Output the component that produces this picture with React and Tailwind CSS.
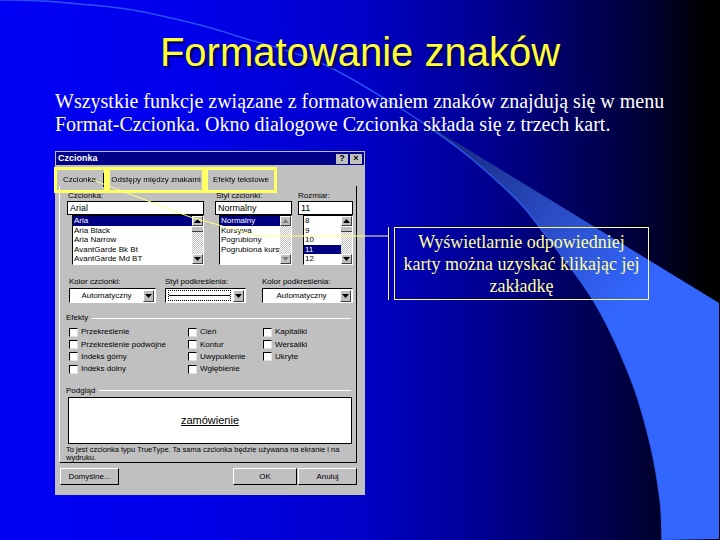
const pts = [[0,0],[43,1],[80,4],[133,10],[200,25],[240,37],[321,63],[400,108],[443,137],[473,160],[517,200],[540,228],[593,300],[630,377],[650,443],[660,500],[662,540]];
function smooth(p) {
  let d = `M${p[0][0]} ${p[0][1]}`;
  for (let i = 0; i < p.length - 1; i++) {
    const a = p[Math.max(i - 1, 0)], b = p[i], c = p[i + 1], e = p[Math.min(i + 2, p.length - 1)];
    d += ` C${(b[0] + (c[0] - a[0]) / 6).toFixed(1)} ${(b[1] + (c[1] - a[1]) / 6).toFixed(1)} ${(c[0] - (e[0] - b[0]) / 6).toFixed(1)} ${(c[1] - (e[1] - b[1]) / 6).toFixed(1)} ${c[0]} ${c[1]}`;
  }
  return d;
}
const full = smooth(pts);
const lower = smooth(pts.slice(7));

function Background() {
  return (
    <svg className="absolute inset-0" width="720" height="540" viewBox="0 0 720 540">
      <defs>
        <linearGradient id="band" gradientUnits="userSpaceOnUse" x1="440" y1="130" x2="630" y2="300">
          <stop offset="0" stopColor="#14267a" />
          <stop offset="0.55" stopColor="#2a4cc4" />
          <stop offset="1" stopColor="#3366ff" />
        </linearGradient>
      </defs>
      <path d={`${lower} L719 539 L719 303 Z`} fill="url(#band)" />
      <path d={full} fill="none" stroke="#3366ff" strokeWidth="1.4" opacity="0.8" />
    </svg>
  );
}

function Tri({ up, muted }) {
  return (
    <svg width="7" height="4" viewBox="0 0 7 4">
      <path d={up ? "M3.5 0L7 4H0Z" : "M0 0H7L3.5 4Z"} fill={muted ? "#808080" : "#000"} />
    </svg>
  );
}

function ScrollBtn({ up, muted }) {
  return (
    <div className="h-[10px] w-[11px] shrink-0 bg-[#c0c0c0] border border-t-white border-l-white border-b-[#404040] border-r-[#404040] flex items-center justify-center">
      <Tri up={up} muted={muted} />
    </div>
  );
}

function ListBox({ items, selected, className, muted, thumb = true }) {
  return (
    <div className={`h-[50px] flex bg-white border border-t-black border-l-black border-b-white border-r-white overflow-hidden ${className}`}>
      <div className="flex-1 min-w-0 overflow-hidden">
        {items.map((t, i) => (
          <div key={t} className={`h-[9.6px] leading-[9.6px] pl-[1px] whitespace-nowrap ${i === selected ? "bg-[#000080] text-white" : "text-black"}`}>{t}</div>
        ))}
      </div>
      <div className="w-[11px] shrink-0 flex flex-col bg-[repeating-conic-gradient(#c0c0c0_0_25%,#ffffff_0_50%)] bg-[length:2px_2px]">
        <ScrollBtn up muted={muted} />
        {thumb && <div className="h-[6px] bg-[#c0c0c0] border-b border-[#404040] border-t border-t-white" />}
        <div className="flex-1" />
        <ScrollBtn muted={muted} />
      </div>
    </div>
  );
}

function Select({ children, className }) {
  return (
    <div className={`h-[15px] flex items-center bg-white border border-t-black border-l-black border-b-white border-r-white pr-[1px] ${className}`}>
      <div className="flex-1 min-w-0 text-center">{children}</div>
      <div className="h-[12px] w-[11px] bg-[#c0c0c0] border border-t-white border-l-white border-b-[#404040] border-r-[#404040] flex items-center justify-center">
        <Tri />
      </div>
    </div>
  );
}

function Check({ label }) {
  return (
    <div className="h-[12.4px] flex items-center gap-[3px] whitespace-nowrap">
      <span className="w-[9px] h-[9px] bg-white border border-t-black border-l-black border-b-[#e0e0e0] border-r-[#e0e0e0] shrink-0" />
      <span>{label}</span>
    </div>
  );
}

function Group({ title, className }) {
  return (
    <div className={`flex items-center gap-[4px] h-[10px] ${className}`}>
      <span>{title}</span>
      <div className="flex-1 h-px bg-white" />
    </div>
  );
}

function Btn({ children, className }) {
  return (
    <div className={`h-[17px] flex items-center justify-center bg-[#c0c0c0] border border-t-white border-l-white border-b-black border-r-black ${className}`}>{children}</div>
  );
}

function Dialog() {
  return (
    <div className="w-[310px] h-[344px] shrink-0 bg-[#c0c0c0] pt-px flex flex-col text-[8px] text-black font-['Liberation_Sans',sans-serif] blur-[0.4px]">
      <div className="mx-px h-[13px] bg-[#000088] flex items-center justify-between pl-[2px] pr-[2px]">
        <span className="text-white text-[9px] font-bold">Czcionka</span>
        <div className="flex gap-[2px]">
          <div className="w-[12px] h-[10px] bg-[#c0c0c0] flex items-center justify-center text-[9px] font-bold leading-none">?</div>
          <div className="w-[12px] h-[10px] bg-[#c0c0c0] flex items-center justify-center text-[9px] font-bold leading-none">×</div>
        </div>
      </div>
      <div className="relative z-10 flex h-[26px] mt-[2px] -ml-px">
        <div className="w-[53px] border-[3px] border-[#ffff66] flex items-center justify-end">
          <span className="pr-[7px] border-r border-black leading-[14px]">Czcionka</span>
        </div>
        <div className="w-[98px] border-[3px] border-[#ffff66] flex items-center justify-center whitespace-nowrap">Odstępy między znakami</div>
        <div className="w-[72px] border-[3px] border-[#ffff66] flex items-center justify-center whitespace-nowrap">Efekty tekstowe</div>
      </div>
      <div className="-mt-[7px] ml-[4px] mr-[8px] h-[277px] border-r border-b border-black border-l border-l-white flex flex-col">
        <div className="flex mt-[4px] pl-[7px] gap-[11px]">
          <div className="w-[137px] flex flex-col">
            <div className="h-[11px] pl-[1px]">Czcionka:</div>
            <div className="h-[14px] bg-white border border-black pl-[2px] text-[9px] leading-[12px]">Arial</div>
            <ListBox className="ml-[5px]" selected={0} items={["Aria", "Aria Black", "Aria Narrow", "AvantGarde Bk Bt", "AvantGarde Md BT"]} />
          </div>
          <div className="w-[77px] flex flex-col">
            <div className="h-[11px] pl-[1px]">Styl czcionki:</div>
            <div className="h-[14px] bg-white border border-black pl-[2px] text-[9px] leading-[12px]">Normalny</div>
            <ListBox className="ml-[4px]" selected={0} muted thumb={false} items={["Normalny", "Kursywa", "Pogrubiony", "Pogrubiona kursywa"]} />
          </div>
          <div className="w-[55px] -ml-[5px] flex flex-col">
            <div className="h-[11px]">Rozmiar:</div>
            <div className="h-[14px] bg-white border border-black pl-[2px] text-[9px] leading-[12px]">11</div>
            <ListBox className="ml-[5px]" selected={3} items={["8", "9", "10", "11", "12"]} />
          </div>
        </div>
        <div className="flex mt-[11px] pl-[9px]">
          <div className="w-[87px] mr-[9px]">
            <div className="h-[12px]">Kolor czcionki:</div>
            <Select>Automatyczny</Select>
          </div>
          <div className="w-[81px] mr-[16px]">
            <div className="h-[12px]">Styl podkreślenia:</div>
            <Select><div className="mx-[2px] h-[11px] border border-dotted border-black flex items-center"><div className="w-full h-px bg-black" /></div></Select>
          </div>
          <div className="w-[91px]">
            <div className="h-[12px]">Kolor podkreślenia:</div>
            <Select>Automatyczny</Select>
          </div>
        </div>
        <Group title="Efekty" className="mt-[10px] pl-[6px] pr-[5px]" />
        <div className="flex mt-[3px] pl-[9px]">
          <div className="w-[119px] shrink-0">
            <Check label="Przekreślenie" />
            <Check label="Przekreślenie podwójne" />
            <Check label="Indeks górny" />
            <Check label="Indeks dolny" />
          </div>
          <div className="w-[75px] shrink-0">
            <Check label="Cień" />
            <Check label="Kontur" />
            <Check label="Uwypuklenie" />
            <Check label="Wgłębienie" />
          </div>
          <div>
            <Check label="Kapitaliki" />
            <Check label="Wersaliki" />
            <Check label="Ukryte" />
          </div>
        </div>
        <Group title="Podgląd" className="mt-[10px] pl-[6px] pr-[5px]" />
        <div className="mt-[1px] ml-[8px] mr-[4px] h-[47px] bg-white border border-black flex items-center justify-center">
          <span className="text-[11px] underline">zamówienie</span>
        </div>
        <div className="mt-[2px] pl-[6px] text-[7.5px] leading-[8px] whitespace-nowrap">To jest czcionka typu TrueType. Ta sama czcionka będzie używana na ekranie i na<br />wydruku.</div>
      </div>
      <div className="flex mt-[5px] ml-[5px] mr-[8px]">
        <Btn className="w-[59px]">Domyślne...</Btn>
        <Btn className="w-[64px] ml-auto">OK</Btn>
        <Btn className="w-[59px] ml-[1px]">Anuluj</Btn>
      </div>
    </div>
  );
}

export default function App() {
  return (
    <div className="relative w-[720px] h-[540px] overflow-hidden bg-[linear-gradient(90deg,#0000f5_0%,#0000ec_25%,#0000c8_50%,#000088_70%,#000034_90%,#000000_98%)]">
      <Background />
      <div className="relative flex flex-col">
        <h1 className="mt-[30px] h-[44px] text-center text-[40px] leading-[44px] text-[#ffff33] font-['Liberation_Sans',sans-serif] [text-shadow:2px_2px_2px_#000050]">Formatowanie znaków</h1>
        <p className="mt-[16px] ml-[55px] w-[640px] text-[20px] leading-[23px] text-white font-['Liberation_Serif',serif] whitespace-nowrap">
          Wszystkie funkcje związane z formatowaniem znaków znajdują się w menu<br />
          <span className="text-[#ffffcc]">Format-Czcionka.</span> Okno dialogowe Czcionka składa się z trzech kart.
        </p>
        <div className="mt-[15px] ml-[55px] flex items-start">
          <Dialog />
          <div className="ml-[23px] mt-[76px] h-[73px] w-px bg-[#ffff99] shrink-0" />
          <div className="ml-[5px] mt-[76px] w-[255px] h-[73px] border border-[#ffff99] flex items-center justify-center text-center text-[18px] leading-[22px] text-[#ffff99] font-['Liberation_Serif',serif] whitespace-nowrap">
            <div>Wyświetlarnie odpowiedniej<br />karty można uzyskać klikając jej<br />zakładkę</div>
          </div>
        </div>
      </div>
      <svg className="absolute inset-0 pointer-events-none" width="720" height="540" viewBox="0 0 720 540">
        <polyline points="93,180 190,217 258,236 388,236" fill="none" stroke="#ffff88" strokeWidth="1" />
      </svg>
    </div>
  );
}
